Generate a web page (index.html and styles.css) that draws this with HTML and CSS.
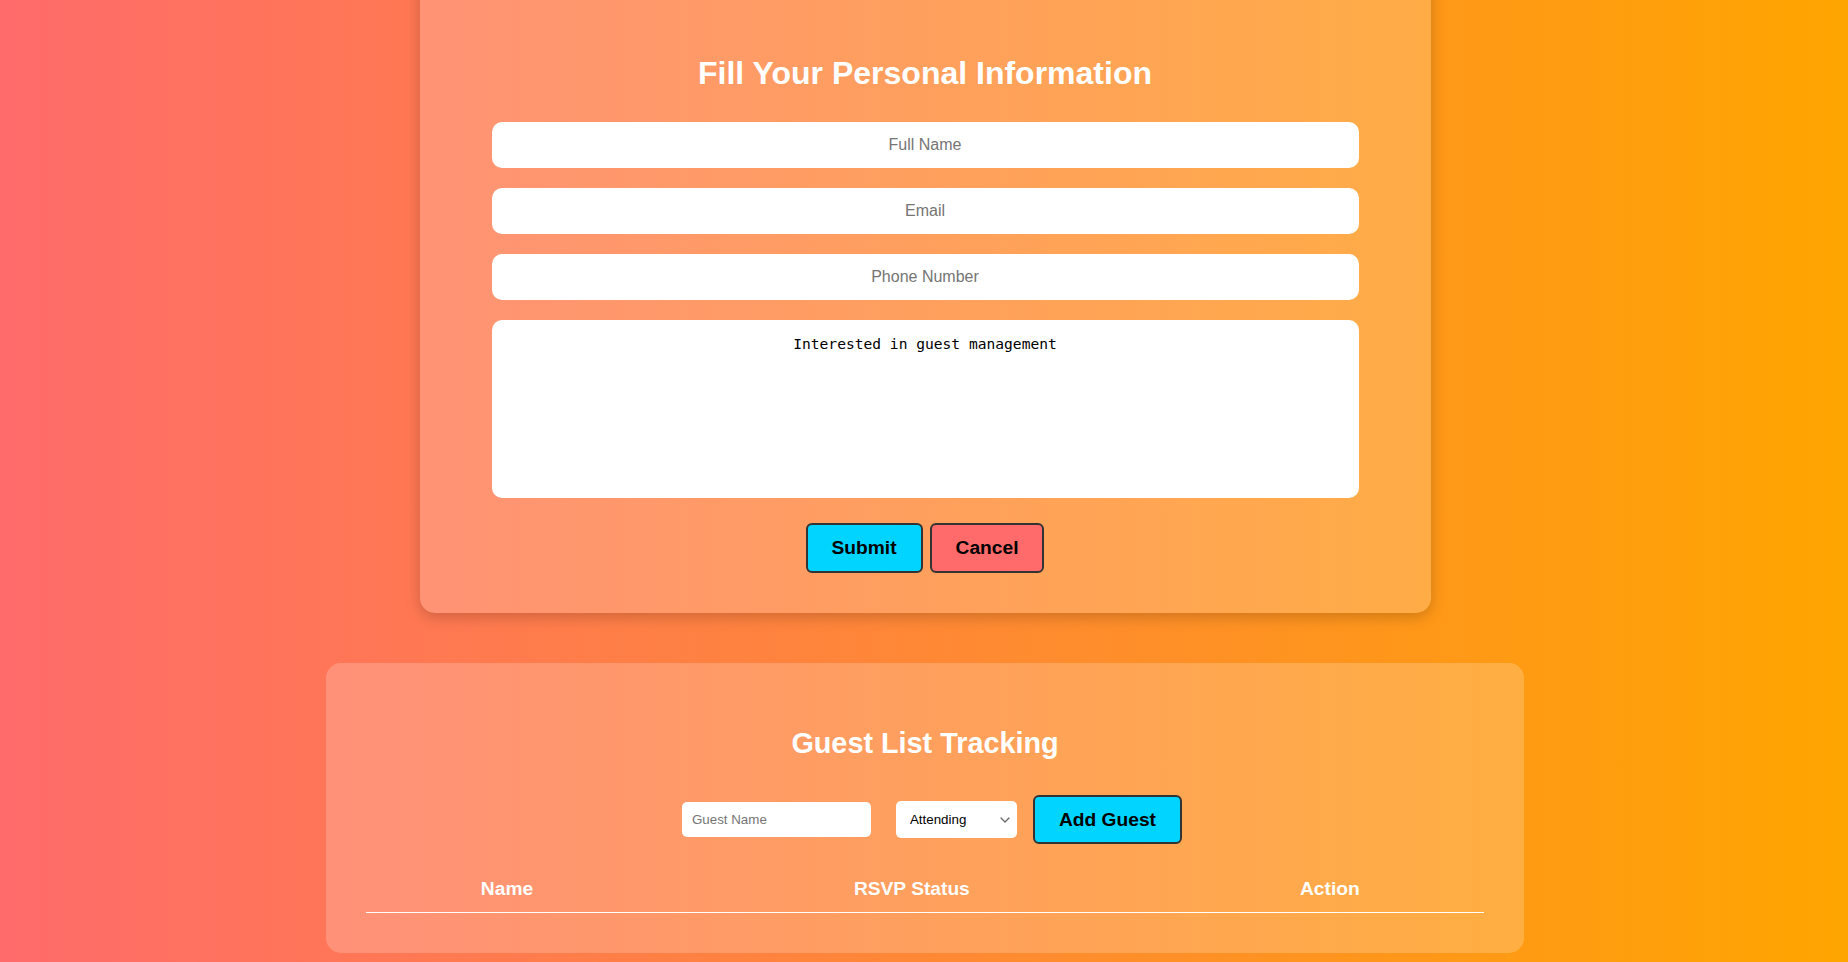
FILE: index.html
```html
<!DOCTYPE html>
<html lang="en">
<head>
<meta charset="utf-8">
<title>Personal Information</title>
<link rel="stylesheet" href="styles.css">
</head>
<body>
<main class="page">
  <section class="card card-info">
    <h2 class="card-title">Fill Your Personal Information</h2>
    <form class="info-form">
      <input class="field" type="text" placeholder="Full Name">
      <input class="field" type="email" placeholder="Email">
      <input class="field" type="tel" placeholder="Phone Number">
      <textarea class="field field-area">Interested in guest management</textarea>
      <div class="actions">
        <button type="button" class="btn btn-primary">Submit</button>
        <button type="button" class="btn btn-danger">Cancel</button>
      </div>
    </form>
  </section>

  <section class="card card-guests">
    <h2 class="card-title card-title-sm">Guest List Tracking</h2>
    <div class="guest-controls">
      <input class="guest-input" type="text" placeholder="Guest Name">
      <span class="select-wrap">
        <select class="guest-select">
          <option>Attending</option>
          <option>Not Attending</option>
          <option>Maybe</option>
        </select>
        <svg class="select-arrow" width="10" height="6" viewBox="0 0 10 6" aria-hidden="true">
          <path d="M1 1 L5 5 L9 1" fill="none" stroke="#666" stroke-width="1.3" stroke-linecap="round" stroke-linejoin="round"/>
        </svg>
      </span>
      <button type="button" class="btn btn-primary btn-add">Add Guest</button>
    </div>
    <table class="guest-table">
      <thead>
        <tr>
          <th class="col-name">Name</th>
          <th class="col-status">RSVP Status</th>
          <th class="col-action">Action</th>
        </tr>
      </thead>
      <tbody></tbody>
    </table>
  </section>
</main>
</body>
</html>
```

FILE: styles.css
```css
html, body {
  margin: 0;
  padding: 0;
}

body {
  font-family: "Liberation Sans", Arial, sans-serif;
  background: linear-gradient(to right, #ff6b6b, #ffa500);
  min-height: 100vh;
  overflow: hidden;
}

.page {
  display: flex;
  flex-direction: column;
  align-items: center;
  gap: 50px;
  margin-top: -29px;
  padding-left: 2px;
}

.card {
  background: rgba(255, 255, 255, 0.2);
  border-radius: 15px;
  box-sizing: border-box;
}

.card-info {
  width: 1011px;
  padding: 40px 72px 40px;
  box-shadow: 0 4px 15px rgba(0, 0, 0, 0.2);
}

.card-guests {
  width: 1198px;
  padding: 40px;
}

.card-title {
  margin: 44px 0 30px;
  color: #fff;
  font-size: 32px;
  line-height: 37px;
  font-weight: bold;
  text-align: center;
}

.card-title-sm {
  margin: 24px 0 35px;
  font-size: 28.8px;
  line-height: 33px;
}

.info-form {
  display: flex;
  flex-direction: column;
  gap: 20px;
}

.field {
  display: block;
  box-sizing: border-box;
  width: 100%;
  height: 46px;
  border: none;
  border-radius: 10px;
  background: #fff;
  padding: 0 12px;
  font-family: "Liberation Sans", Arial, sans-serif;
  font-size: 16px;
  text-align: center;
  color: #000;
  outline: none;
}

.field::placeholder {
  color: #757575;
}

.field-area {
  height: 178px;
  padding: 15px 12px;
  resize: none;
  font-family: "DejaVu Sans Mono", "Liberation Mono", monospace;
  font-size: 14.6px;
  line-height: 17px;
}

.actions {
  display: flex;
  justify-content: center;
  gap: 7px;
  margin-top: 5px;
}

.btn {
  box-sizing: border-box;
  height: 50px;
  padding: 0 24px;
  border: 2px solid #333;
  border-radius: 6px;
  font-family: "Liberation Sans", Arial, sans-serif;
  font-size: 19.2px;
  font-weight: bold;
  color: #000;
  cursor: pointer;
}

.btn-primary {
  background: #00d4ff;
}

.btn-danger {
  background: #ff6b6b;
}

.guest-controls {
  display: flex;
  justify-content: center;
  align-items: center;
  padding-left: 14px;
}

.guest-input {
  box-sizing: border-box;
  width: 189px;
  height: 35px;
  padding: 0 10px;
  border: none;
  border-radius: 5px;
  background: #fff;
  font-family: "Liberation Sans", Arial, sans-serif;
  font-size: 13.33px;
  margin-right: 25px;
  outline: none;
}

.guest-input::placeholder {
  color: #757575;
}

.select-wrap {
  position: relative;
  display: block;
  margin-right: 16px;
}

.guest-select {
  display: block;
  box-sizing: border-box;
  width: 121px;
  height: 37px;
  padding: 0 24px 0 14px;
  border: none;
  border-radius: 5px;
  background-color: #fff;
  font-family: "Liberation Sans", Arial, sans-serif;
  font-size: 13.33px;
  color: #000;
  appearance: none;
  -webkit-appearance: none;
}

.select-arrow {
  position: absolute;
  right: 7px;
  top: 16px;
  pointer-events: none;
}

.btn-add {
  height: 49px;
  padding: 0 24px;
}

.guest-table {
  width: 100%;
  margin-top: 22px;
  border-collapse: collapse;
  table-layout: fixed;
}

.guest-table th {
  padding: 12px;
  color: #fff;
  font-size: 19.2px;
  line-height: 22px;
  font-weight: bold;
  text-align: center;
  border-bottom: 1px solid #fff;
}

.col-name {
  width: 24.7%;
}

.col-status {
  width: 48.1%;
}

.col-action {
  width: 27.2%;
}
```
